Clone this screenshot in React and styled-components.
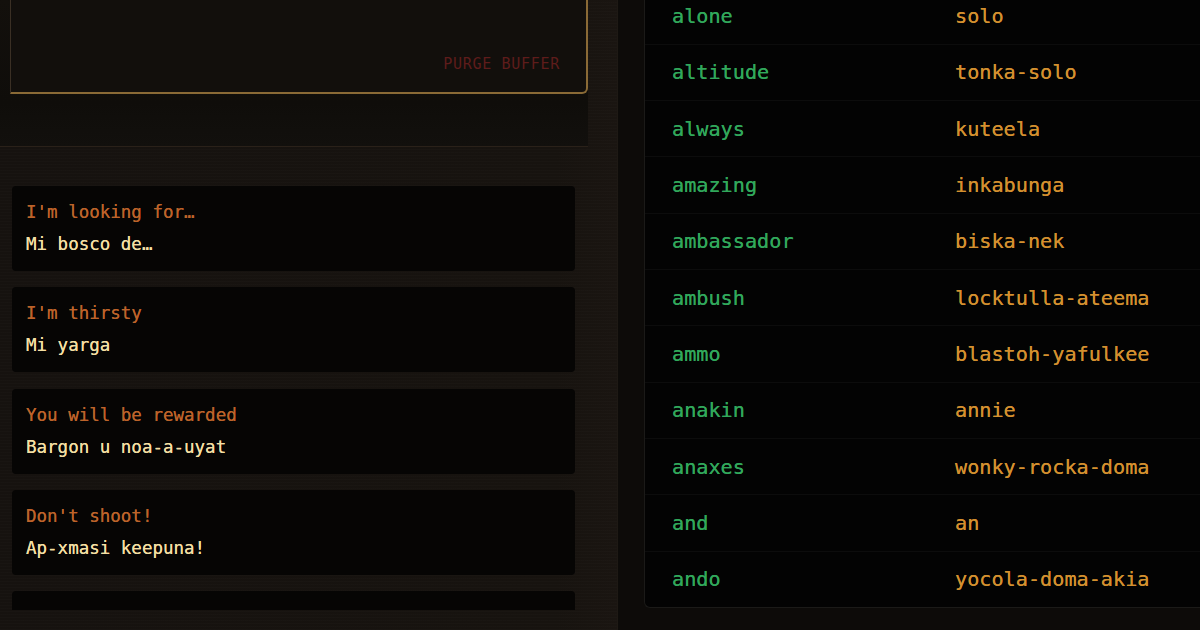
import React from "react";
import styled, { createGlobalStyle } from "styled-components";

const Global = createGlobalStyle`
  html, body { margin: 0; padding: 0; background: #16120f; }
  body { font-family: "DejaVu Sans Mono", "Liberation Mono", monospace; overflow: hidden; }
  * { box-sizing: border-box; }
`;

const Page = styled.div`
  width: 1200px;
  height: 630px;
  display: grid;
  grid-template-columns: 617px 1fr;
  overflow: hidden;
`;

const LeftPanel = styled.section`
  display: flex;
  flex-direction: column;
  padding-right: 29px;
  background:
    repeating-linear-gradient(0deg, rgba(255,255,255,0.012) 0 1px, transparent 1px 3px),
    linear-gradient(90deg, #16120f 0%, #17130f 90%, #1a1511 100%);
  height: 630px;
  overflow: hidden;
`;

const Composer = styled.div`
  height: 147px;
  padding-left: 10px;
  border-bottom: 1px solid #2a2119;
  background: linear-gradient(180deg, #13100c 0%, #0f0d0a 70%, #12100d 100%);
`;

const Buffer = styled.div`
  height: 94px;
  border: 2px solid #8a6a36;
  border-top: none;
  border-left-color: #3a2f24;
  border-left-width: 1px;
  border-radius: 0 0 6px 0;
  background: #120f0c;
  display: flex;
  align-items: flex-end;
  justify-content: flex-end;
  padding: 0 26px 20px 0;
`;

const PurgeButton = styled.button`
  background: none;
  border: none;
  padding: 0;
  font-family: "DejaVu Sans Mono", monospace;
  font-size: 15px;
  letter-spacing: 0.7px;
  color: #5e1c1b;
  line-height: 16px;
`;

const PhraseList = styled.div`
  flex: 0 0 auto;
  height: 463px;
  overflow: hidden;
  padding: 39px 13px 0 12px;
  display: flex;
  flex-direction: column;
  gap: 16.3px;
`;

const PhraseCard = styled.div`
  flex: 0 0 85px;
  height: 85px;
  background: #060504;
  border-radius: 4px;
  padding: 14px 14px 0;
  display: flex;
  flex-direction: column;
  gap: 8px;
`;

const PhraseLine = styled.div`
  font-size: 17.5px;
  line-height: 24px;
  white-space: nowrap;
  color: ${(p) => (p.$native ? "#f4dfa2" : "#bd632a")};
  text-shadow: 0 0 0.4px currentColor;
`;

const RightPanel = styled.section`
  height: 630px;
  background: #0d0b09;
  border-left: 1px solid #1e1914;
  padding: 0 0 22px 26px;
  display: flex;
  flex-direction: column;
  justify-content: flex-end;
  overflow: hidden;
`;

const Table = styled.div`
  flex: 0 0 auto;
  background: #030303;
  border: 1px solid #1b1a18;
  border-top: none;
  border-right: none;
  border-radius: 0 0 0 6px;
  width: 620px;
`;

const Row = styled.div`
  display: grid;
  grid-template-columns: 283px 1fr;
  align-items: center;
  height: 56.35px;
  padding-left: 27px;
  border-top: 1px solid #0c0c0c;
  font-size: 20.2px;
  white-space: nowrap;
`;

const Word = styled.span`
  color: ${(p) => (p.$alien ? "#d4902f" : "#31a85b")};
  text-shadow: 0 0 0.5px currentColor;
`;

const phrases = [
  ["I'm looking for…", "Mi bosco de…"],
  ["I'm thirsty", "Mi yarga"],
  ["You will be rewarded", "Bargon u noa-a-uyat"],
  ["Don't shoot!", "Ap-xmasi keepuna!"],
  ["Hurry up!", "Chuba!"],
];

const words = [
  ["alone", "solo"],
  ["altitude", "tonka-solo"],
  ["always", "kuteela"],
  ["amazing", "inkabunga"],
  ["ambassador", "biska-nek"],
  ["ambush", "locktulla-ateema"],
  ["ammo", "blastoh-yafulkee"],
  ["anakin", "annie"],
  ["anaxes", "wonky-rocka-doma"],
  ["and", "an"],
  ["ando", "yocola-doma-akia"],
];

export default function App() {
  return (
    <>
      <Global />
      <Page>
        <LeftPanel>
          <Composer>
            <Buffer>
              <PurgeButton>PURGE BUFFER</PurgeButton>
            </Buffer>
          </Composer>
          <PhraseList>
            {phrases.map(([en, nat]) => (
              <PhraseCard key={en}>
                <PhraseLine>{en}</PhraseLine>
                <PhraseLine $native>{nat}</PhraseLine>
              </PhraseCard>
            ))}
          </PhraseList>
        </LeftPanel>
        <RightPanel>
          <Table>
            {words.map(([en, al]) => (
              <Row key={en}>
                <Word>{en}</Word>
                <Word $alien>{al}</Word>
              </Row>
            ))}
          </Table>
        </RightPanel>
      </Page>
    </>
  );
}
